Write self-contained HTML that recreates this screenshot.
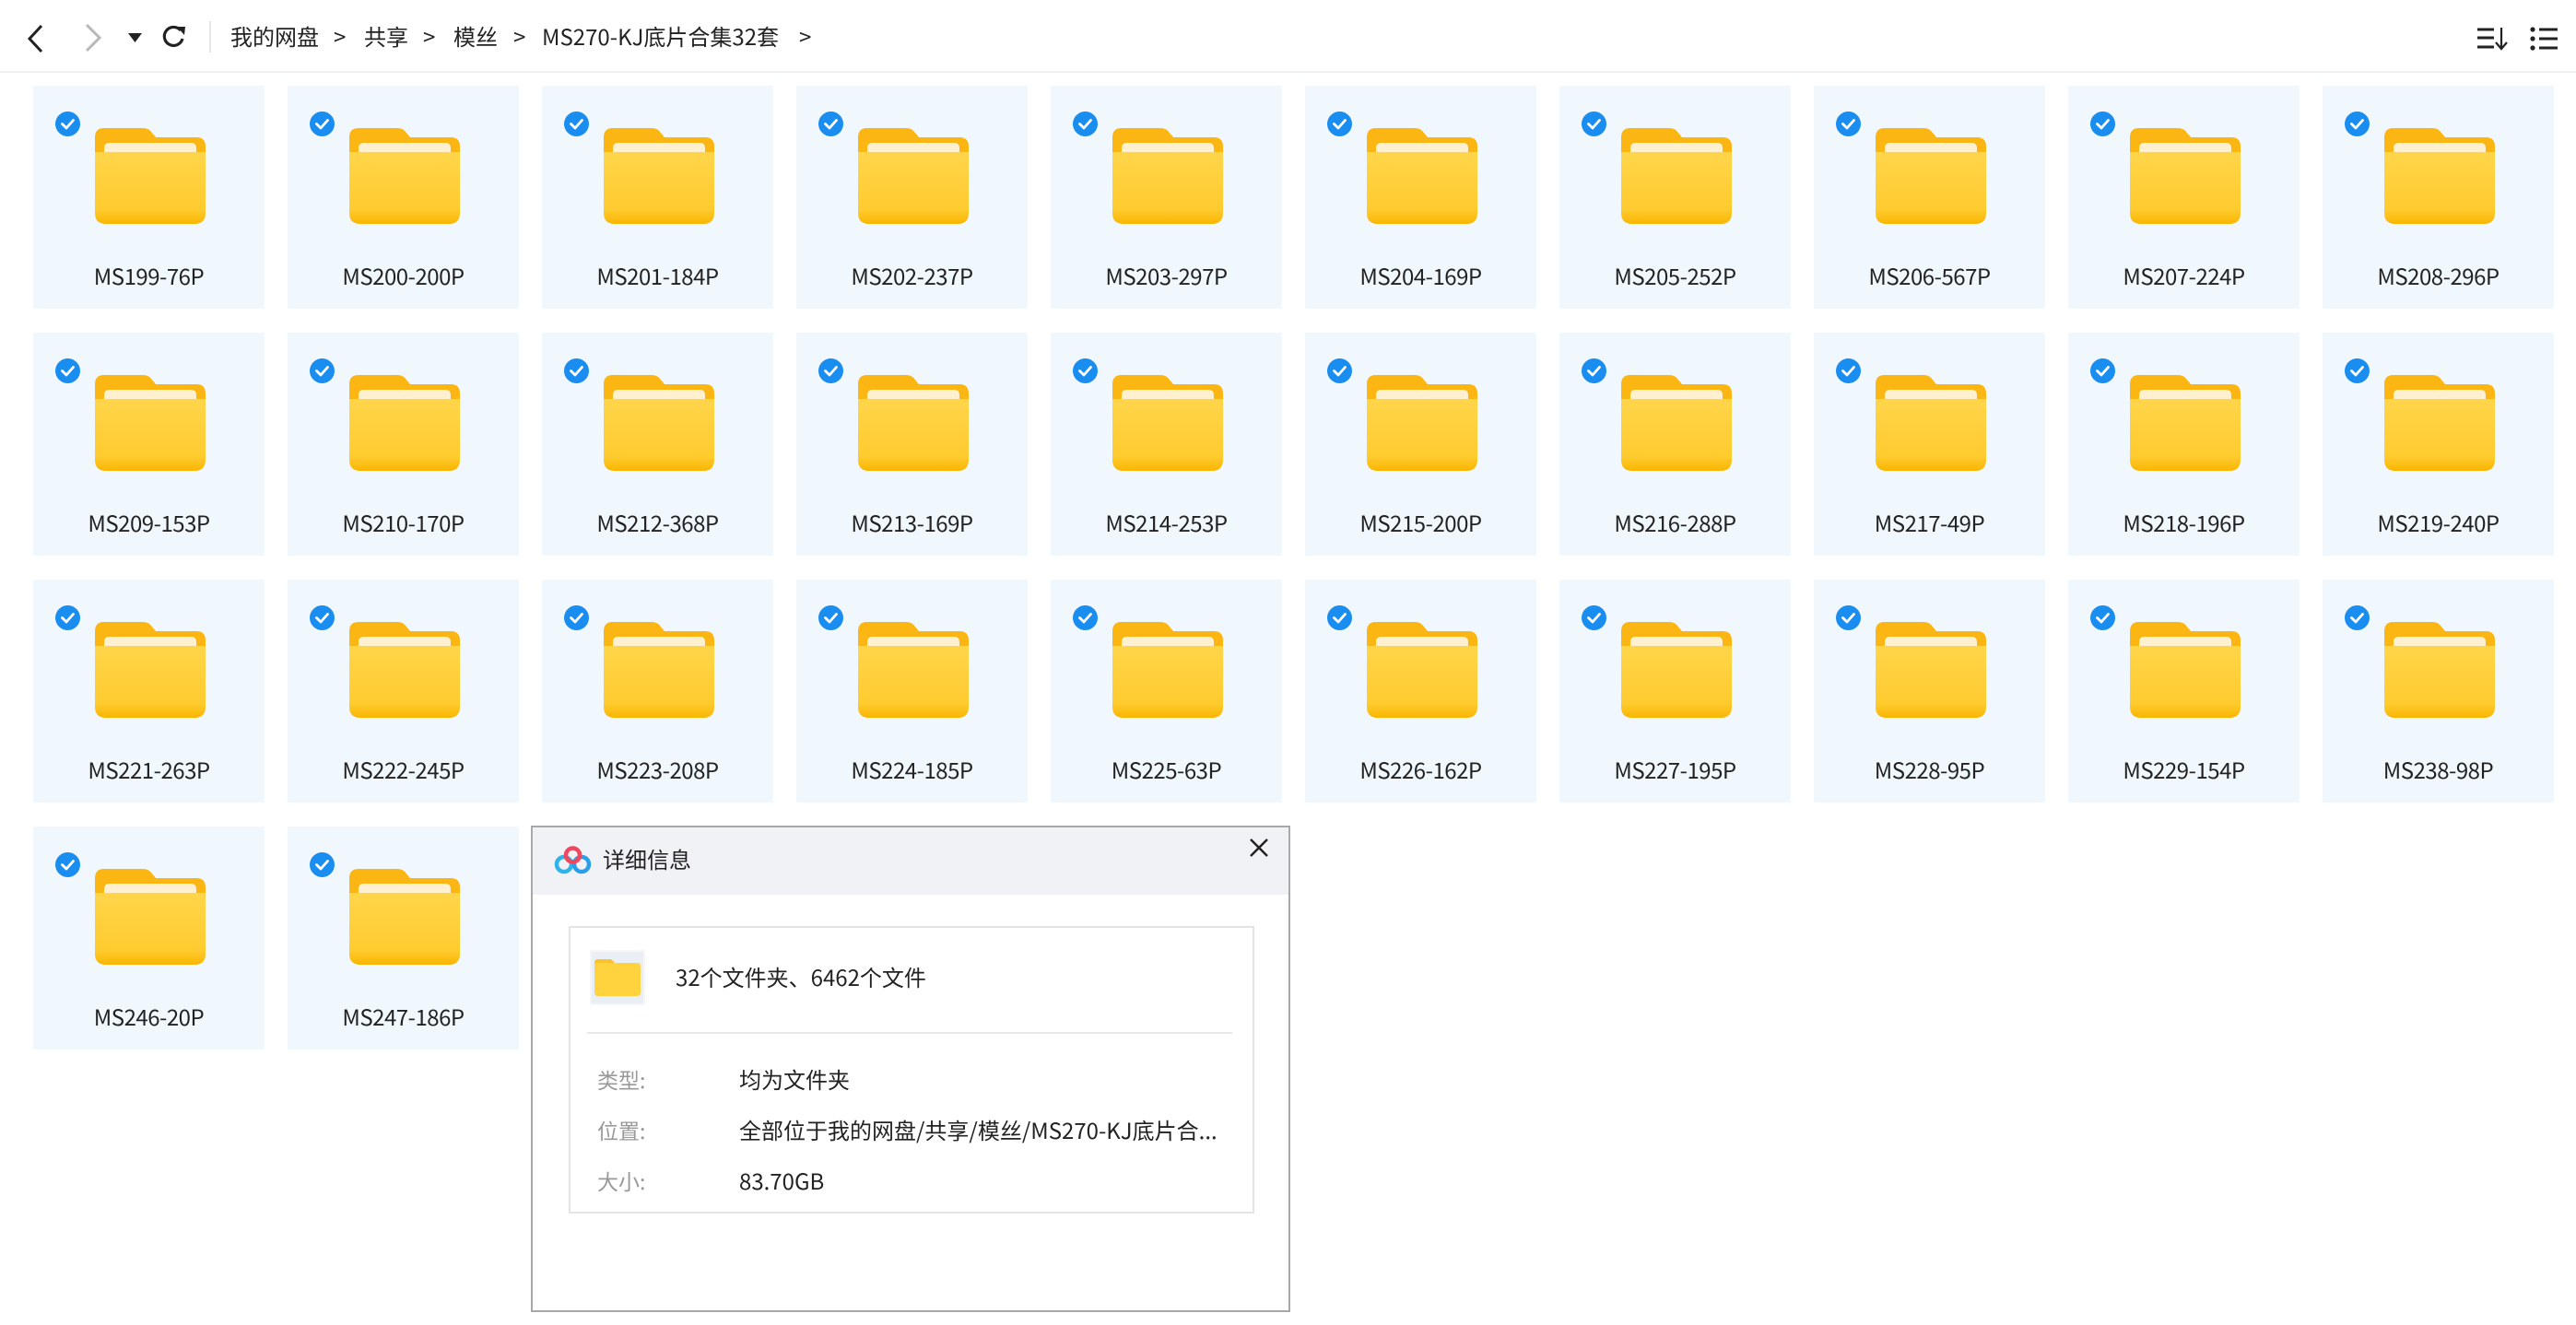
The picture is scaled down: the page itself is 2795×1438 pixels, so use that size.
<!DOCTYPE html>
<html><head><meta charset="utf-8">
<style>
*{margin:0;padding:0;box-sizing:border-box}
body{width:2795px;height:1438px;background:#fff;position:relative;overflow:hidden;font-family:"Liberation Sans","Noto Sans CJK SC",sans-serif;color:#222}
.hdr{position:absolute;left:0;top:0;width:2795px;height:79px;border-bottom:2px solid #f0f0f0}
.bc{position:absolute;top:22px;font-size:24px;line-height:34px;color:#222;font-family:"Noto Sans CJK SC","Liberation Sans",sans-serif}
.t{position:absolute;width:251px;height:242px;background:#f0f7fd}
.t .ck{position:absolute;left:24px;top:28px;width:27px;height:27px}
.t .fd{position:absolute;left:67px;top:46px;width:120px;height:104px}
.t .lb{position:absolute;left:0;top:190px;width:251px;text-align:center;font-size:24px;line-height:32px;color:#222;font-family:"Noto Sans CJK SC","Liberation Sans",sans-serif;letter-spacing:-0.5px}
.dlg{position:absolute;left:576px;top:896px;width:824px;height:528px;border:2px solid #a8a8a8;background:#fff}
.dh{position:absolute;left:0;top:0;width:820px;height:73px;background:#f1f2f6}
.cjk{font-family:"Noto Sans CJK SC","Liberation Sans",sans-serif}
</style></head><body>
<svg width="0" height="0" style="position:absolute">
<defs>
<linearGradient id="gf" x1="0" y1="0" x2="0" y2="1"><stop offset="0" stop-color="#ffd54a"/><stop offset="0.8" stop-color="#ffcb2f"/><stop offset="1" stop-color="#f9b600"/></linearGradient>
<symbol id="fold" viewBox="0 0 120 104">
<path d="M0 10 Q0 0 10 0 H52 Q58 0 61 4 L66 10 H110 Q120 10 120 20 V60 H0 Z" fill="#fbb614"/>
<rect x="10" y="16" width="100" height="20" rx="5" fill="#fff0cf"/>
<path d="M0 26 H120 V92 Q120 104 108 104 H12 Q0 104 0 92 Z" fill="url(#gf)"/>
</symbol>
<symbol id="chk" viewBox="0 0 27 27">
<circle cx="13.5" cy="13.5" r="13.5" fill="#1a8df0"/>
<path d="M7.5 13.5 L12 18 L19.5 9.5" fill="none" stroke="#fff" stroke-width="2.8" stroke-linecap="round" stroke-linejoin="round"/>
</symbol>
</defs></svg>

<div class="hdr">
<svg style="position:absolute;left:28px;top:26px" width="22" height="32"><path d="M17 2 L4 16 L17 30" fill="none" stroke="#222" stroke-width="3"/></svg>
<svg style="position:absolute;left:89px;top:25px" width="24" height="32"><path d="M5 2 L19 16 L5 30" fill="none" stroke="#b8b8b8" stroke-width="3"/></svg>
<svg style="position:absolute;left:139px;top:36px" width="16" height="11"><path d="M0 0 H15 L7.5 10 Z" fill="#222"/></svg>
<svg style="position:absolute;left:174px;top:27px" width="30" height="26"><path d="M22 6 A10 10 0 1 0 24 15" fill="none" stroke="#222" stroke-width="3.2"/><path d="M18 2 L27 2 L26 11 Z" fill="#222"/></svg>
<div style="position:absolute;left:227px;top:23px;width:2px;height:34px;background:#e6e6e6"></div>
<div class="bc" style="left:250px">我的网盘</div>
<div class="bc" style="left:362px">&gt;</div>
<div class="bc" style="left:395px">共享</div>
<div class="bc" style="left:459px">&gt;</div>
<div class="bc" style="left:492px">模丝</div>
<div class="bc" style="left:557px">&gt;</div>
<div class="bc" style="left:588px">MS270-KJ底片合集32套</div>
<div class="bc" style="left:867px">&gt;</div>
<svg style="position:absolute;left:2686px;top:28px" width="36" height="28"><g stroke="#222" stroke-width="3"><path d="M2 4 H20 M2 13 H20 M2 23 H20"/></g><path d="M28 2 V24 M22 18 L28 25 L34 18" fill="none" stroke="#222" stroke-width="2.2"/></svg>
<svg style="position:absolute;left:2744px;top:28px" width="32" height="28"><g fill="#222"><circle cx="4" cy="4" r="2.6"/><circle cx="4" cy="14" r="2.6"/><circle cx="4" cy="24" r="2.6"/></g><g stroke="#222" stroke-width="3"><path d="M11 4 H31 M11 14 H31 M11 24 H31"/></g></svg>
</div>

<div class="t" style="left:36px;top:93px"><svg class="ck"><use href="#chk"/></svg><svg class="fd"><use href="#fold"/></svg><div class="lb">MS199-76P</div></div>
<div class="t" style="left:312px;top:93px"><svg class="ck"><use href="#chk"/></svg><svg class="fd"><use href="#fold"/></svg><div class="lb">MS200-200P</div></div>
<div class="t" style="left:588px;top:93px"><svg class="ck"><use href="#chk"/></svg><svg class="fd"><use href="#fold"/></svg><div class="lb">MS201-184P</div></div>
<div class="t" style="left:864px;top:93px"><svg class="ck"><use href="#chk"/></svg><svg class="fd"><use href="#fold"/></svg><div class="lb">MS202-237P</div></div>
<div class="t" style="left:1140px;top:93px"><svg class="ck"><use href="#chk"/></svg><svg class="fd"><use href="#fold"/></svg><div class="lb">MS203-297P</div></div>
<div class="t" style="left:1416px;top:93px"><svg class="ck"><use href="#chk"/></svg><svg class="fd"><use href="#fold"/></svg><div class="lb">MS204-169P</div></div>
<div class="t" style="left:1692px;top:93px"><svg class="ck"><use href="#chk"/></svg><svg class="fd"><use href="#fold"/></svg><div class="lb">MS205-252P</div></div>
<div class="t" style="left:1968px;top:93px"><svg class="ck"><use href="#chk"/></svg><svg class="fd"><use href="#fold"/></svg><div class="lb">MS206-567P</div></div>
<div class="t" style="left:2244px;top:93px"><svg class="ck"><use href="#chk"/></svg><svg class="fd"><use href="#fold"/></svg><div class="lb">MS207-224P</div></div>
<div class="t" style="left:2520px;top:93px"><svg class="ck"><use href="#chk"/></svg><svg class="fd"><use href="#fold"/></svg><div class="lb">MS208-296P</div></div>

<div class="t" style="left:36px;top:361px"><svg class="ck"><use href="#chk"/></svg><svg class="fd"><use href="#fold"/></svg><div class="lb">MS209-153P</div></div>
<div class="t" style="left:312px;top:361px"><svg class="ck"><use href="#chk"/></svg><svg class="fd"><use href="#fold"/></svg><div class="lb">MS210-170P</div></div>
<div class="t" style="left:588px;top:361px"><svg class="ck"><use href="#chk"/></svg><svg class="fd"><use href="#fold"/></svg><div class="lb">MS212-368P</div></div>
<div class="t" style="left:864px;top:361px"><svg class="ck"><use href="#chk"/></svg><svg class="fd"><use href="#fold"/></svg><div class="lb">MS213-169P</div></div>
<div class="t" style="left:1140px;top:361px"><svg class="ck"><use href="#chk"/></svg><svg class="fd"><use href="#fold"/></svg><div class="lb">MS214-253P</div></div>
<div class="t" style="left:1416px;top:361px"><svg class="ck"><use href="#chk"/></svg><svg class="fd"><use href="#fold"/></svg><div class="lb">MS215-200P</div></div>
<div class="t" style="left:1692px;top:361px"><svg class="ck"><use href="#chk"/></svg><svg class="fd"><use href="#fold"/></svg><div class="lb">MS216-288P</div></div>
<div class="t" style="left:1968px;top:361px"><svg class="ck"><use href="#chk"/></svg><svg class="fd"><use href="#fold"/></svg><div class="lb">MS217-49P</div></div>
<div class="t" style="left:2244px;top:361px"><svg class="ck"><use href="#chk"/></svg><svg class="fd"><use href="#fold"/></svg><div class="lb">MS218-196P</div></div>
<div class="t" style="left:2520px;top:361px"><svg class="ck"><use href="#chk"/></svg><svg class="fd"><use href="#fold"/></svg><div class="lb">MS219-240P</div></div>

<div class="t" style="left:36px;top:629px"><svg class="ck"><use href="#chk"/></svg><svg class="fd"><use href="#fold"/></svg><div class="lb">MS221-263P</div></div>
<div class="t" style="left:312px;top:629px"><svg class="ck"><use href="#chk"/></svg><svg class="fd"><use href="#fold"/></svg><div class="lb">MS222-245P</div></div>
<div class="t" style="left:588px;top:629px"><svg class="ck"><use href="#chk"/></svg><svg class="fd"><use href="#fold"/></svg><div class="lb">MS223-208P</div></div>
<div class="t" style="left:864px;top:629px"><svg class="ck"><use href="#chk"/></svg><svg class="fd"><use href="#fold"/></svg><div class="lb">MS224-185P</div></div>
<div class="t" style="left:1140px;top:629px"><svg class="ck"><use href="#chk"/></svg><svg class="fd"><use href="#fold"/></svg><div class="lb">MS225-63P</div></div>
<div class="t" style="left:1416px;top:629px"><svg class="ck"><use href="#chk"/></svg><svg class="fd"><use href="#fold"/></svg><div class="lb">MS226-162P</div></div>
<div class="t" style="left:1692px;top:629px"><svg class="ck"><use href="#chk"/></svg><svg class="fd"><use href="#fold"/></svg><div class="lb">MS227-195P</div></div>
<div class="t" style="left:1968px;top:629px"><svg class="ck"><use href="#chk"/></svg><svg class="fd"><use href="#fold"/></svg><div class="lb">MS228-95P</div></div>
<div class="t" style="left:2244px;top:629px"><svg class="ck"><use href="#chk"/></svg><svg class="fd"><use href="#fold"/></svg><div class="lb">MS229-154P</div></div>
<div class="t" style="left:2520px;top:629px"><svg class="ck"><use href="#chk"/></svg><svg class="fd"><use href="#fold"/></svg><div class="lb">MS238-98P</div></div>

<div class="t" style="left:36px;top:897px"><svg class="ck"><use href="#chk"/></svg><svg class="fd"><use href="#fold"/></svg><div class="lb">MS246-20P</div></div>
<div class="t" style="left:312px;top:897px"><svg class="ck"><use href="#chk"/></svg><svg class="fd"><use href="#fold"/></svg><div class="lb">MS247-186P</div></div>

<div class="dlg">
<div class="dh"></div>
<svg style="position:absolute;left:23px;top:20px" width="42" height="32" viewBox="0 0 42 32">
<circle cx="11" cy="20" r="8" fill="none" stroke="#2fb3ea" stroke-width="4.5"/>
<circle cx="30" cy="20" r="8" fill="none" stroke="#2a9ee8" stroke-width="4.5"/>
<circle cx="20.5" cy="10" r="7.5" fill="none" stroke="#f0475f" stroke-width="4.5"/>
</svg>
<div class="cjk" style="position:absolute;left:76px;top:17px;font-size:24px;line-height:34px;color:#222">详细信息</div>
<svg style="position:absolute;left:776px;top:10px" width="24" height="24"><path d="M3 3 L21 21 M21 3 L3 21" stroke="#222" stroke-width="2.5"/></svg>
<div style="position:absolute;left:39px;top:107px;width:744px;height:312px;border:2px solid #e4e4e4"></div>
<div style="position:absolute;left:62px;top:133px;width:60px;height:60px;background:#e9eff4;border:2px solid #f6f6f6"></div>
<svg style="position:absolute;left:67px;top:143px" width="50" height="40" viewBox="0 0 50 40"><path d="M0 4 Q0 0 4 0 H18 L22 4 H46 Q50 4 50 8 V36 Q50 40 46 40 H4 Q0 40 0 36 Z" fill="#ffd33d"/><path d="M0 4 Q0 0 4 0 H18 L22 4 H0 Z" fill="#f9c42a"/></svg>
<div class="cjk" style="position:absolute;left:155px;top:145px;font-size:24px;line-height:34px;color:#222">32个文件夹、6462个文件</div>
<div style="position:absolute;left:59px;top:222px;width:700px;height:2px;background:#e8e8e8"></div>
<div class="cjk" style="position:absolute;left:70px;top:256px;font-size:23px;line-height:34px;color:#999">类型:</div>
<div class="cjk" style="position:absolute;left:224px;top:256px;font-size:24px;line-height:34px;color:#222">均为文件夹</div>
<div class="cjk" style="position:absolute;left:70px;top:311px;font-size:23px;line-height:34px;color:#999">位置:</div>
<div class="cjk" style="position:absolute;left:224px;top:311px;font-size:24px;line-height:34px;color:#222">全部位于我的网盘/共享/模丝/MS270-KJ底片合...</div>
<div class="cjk" style="position:absolute;left:70px;top:366px;font-size:23px;line-height:34px;color:#999">大小:</div>
<div class="cjk" style="position:absolute;left:224px;top:366px;font-size:24px;line-height:34px;color:#222">83.70GB</div>
</div>
</body></html>
